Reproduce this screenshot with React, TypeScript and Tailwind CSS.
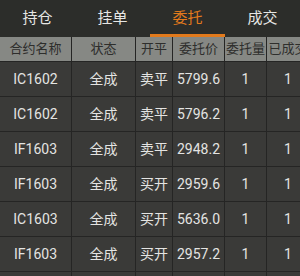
import React from "react";

const tabs = ["持仓", "挂单", "委托", "成交"];
const headers = ["合约名称", "状态", "开平", "委托价", "委托量", "已成交"];
const rows = [
  ["IC1602", "全成", "卖平", "5799.6", "1", "1"],
  ["IC1602", "全成", "卖平", "5796.2", "1", "1"],
  ["IF1603", "全成", "卖平", "2948.2", "1", "1"],
  ["IF1603", "全成", "买开", "2959.6", "1", "1"],
  ["IC1603", "全成", "买开", "5636.0", "1", "1"],
  ["IF1603", "全成", "买开", "2957.2", "1", "1"],
  ["", "", "", "", "", ""],
];

const cols = "grid-cols-[71px_63px_36px_51px_41px_42px]";

export default function App() {
  return (
    <div
      className="w-[300px] h-[276px] overflow-hidden bg-[#3a3a38]"
      style={{ fontFamily: 'Roboto, "Noto Sans CJK SC", sans-serif' }}
    >
      <div className="flex h-[37px] bg-[#2c2d2a]">
        {tabs.map((t, i) => (
          <div
            key={t}
            className={
              i === 2
                ? "w-[75px] flex items-center justify-center text-[15px] text-[#e27a1c] border-b-[3px] border-[#e27a1c] pt-[2px]"
                : "w-[75px] flex items-center justify-center text-[15px] text-[#e6e6e4] border-b-[3px] border-transparent pt-[2px]"
            }
          >
            {t}
          </div>
        ))}
      </div>
      <div className={`grid ${cols} gap-px bg-[#252524] w-[310px] pb-px`}>
        {headers.map((h) => (
          <div
            key={h}
            className="h-[24px] bg-[#868884] text-[#2e2e2c] text-[13px] flex items-center justify-center whitespace-nowrap"
          >
            {h}
          </div>
        ))}
        {rows.map((r, ri) =>
          r.map((c, ci) => (
            <div
              key={`${ri}-${ci}`}
              className="h-[34px] bg-[#3a3a38] text-[#e4e4e2] text-[14px] flex items-center justify-center whitespace-nowrap"
            >
              {c}
            </div>
          ))
        )}
      </div>
    </div>
  );
}
